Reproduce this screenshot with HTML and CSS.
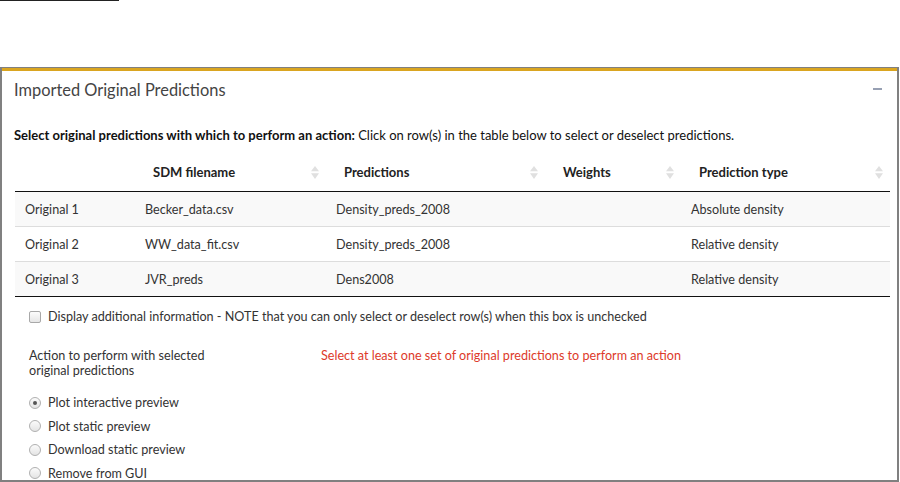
FILE: index.html
```html
<!DOCTYPE html>
<html lang="en">
<head>
    <meta charset="UTF-8">
    <title>Imported Original Predictions</title>
    <link rel="stylesheet" href="styles.css">
</head>
<body>
    <div class="tabline"></div>

    <div class="frame">
        <div class="box">
            <div class="box-header">
                <h3 class="box-title">Imported Original Predictions</h3>
                <span class="collapse"></span>
            </div>

            <p class="intro"><b>Select original predictions with which to perform an action:</b> Click on row(s) in the table below to select or deselect predictions.</p>

            <table class="preds">
                <colgroup>
                    <col style="width: 120px">
                    <col style="width: 191px">
                    <col style="width: 219px">
                    <col style="width: 136px">
                    <col style="width: 209px">
                </colgroup>
                <thead>
                    <tr>
                        <th></th>
                        <th class="sort">SDM filename</th>
                        <th class="sort">Predictions</th>
                        <th class="sort">Weights</th>
                        <th class="sort">Prediction type</th>
                    </tr>
                </thead>
                <tbody>
                    <tr>
                        <td>Original 1</td>
                        <td>Becker_data.csv</td>
                        <td>Density_preds_2008</td>
                        <td></td>
                        <td>Absolute density</td>
                    </tr>
                    <tr>
                        <td>Original 2</td>
                        <td>WW_data_fit.csv</td>
                        <td>Density_preds_2008</td>
                        <td></td>
                        <td>Relative density</td>
                    </tr>
                    <tr>
                        <td>Original 3</td>
                        <td>JVR_preds</td>
                        <td>Dens2008</td>
                        <td></td>
                        <td>Relative density</td>
                    </tr>
                </tbody>
            </table>

            <label class="check">
                <span class="checkbox"></span>
                Display additional information - NOTE that you can only select or deselect row(s) when this box is unchecked
            </label>

            <div class="action-row">
                <div class="action-left">
                    <div class="action-label">Action to perform with selected<br>original predictions</div>
                    <div class="radios">
                        <label class="radio"><span class="dot checked"></span>Plot interactive preview</label>
                        <label class="radio"><span class="dot"></span>Plot static preview</label>
                        <label class="radio"><span class="dot"></span>Download static preview</label>
                        <label class="radio"><span class="dot"></span>Remove from GUI</label>
                    </div>
                </div>
                <div class="warning">Select at least one set of original predictions to perform an action</div>
            </div>
        </div>
    </div>
</body>
</html>
```

FILE: styles.css
```css
body {
    margin: 0;
    font-family: Lato, "Open Sans", sans-serif;
    font-size: 12.6px;
    color: #333;
    background: #fff;
    overflow: hidden;
}
.tabline {
    width: 119px;
    height: 1px;
    background: #222;
    margin-bottom: 66px;
}
.frame {
    width: 895px;
    height: 412px;
    border: 2px solid #808080;
    border-top-width: 1px;
    overflow: hidden;
}
.box {
    border-top: 3px solid #daa520;
}
.box-header {
    display: flex;
    justify-content: space-between;
    align-items: center;
    padding: 3px 12px 0 12px;
    height: 30px;
}
.box-title {
    margin: 0;
    font-size: 16.4px;
    font-weight: normal;
    color: #444;
}
.collapse {
    width: 9px;
    height: 2px;
    background: #97a0b3;
    margin-right: 3px;
}
.intro {
    margin: 23px 0 0 12px;
    font-size: 13px;
    color: #111;
}
.preds {
    margin: 10px 0 0 13px;
    border-collapse: collapse;
    table-layout: fixed;
    width: 875px;
}
.preds th {
    text-align: left;
    font-size: 13px;
    font-weight: bold;
    padding: 0 10px 0 18px;
    height: 38px;
    border-bottom: 1px solid #111;
    color: #222;
    position: relative;
}
/* up/down sort arrows */
.preds th.sort::after {
    content: "";
    position: absolute;
    right: 7px;
    top: 13px;
    width: 8px;
    height: 13px;
    background: #e0e0e0;
    clip-path: polygon(50% 0, 100% 40%, 0 40%, 0 55%, 100% 55%, 50% 100%, 0 55%, 0 40%);
}
.preds td {
    padding: 0 10px;
    height: 34px;
    border-top: 1px solid #ddd;
}
.preds tbody tr:first-child td {
    border-top: none;
}
.preds tbody tr:nth-child(odd) {
    background: #f9f9f9;
}
.preds tbody tr:last-child td {
    border-bottom: 1px solid #111;
}
.check {
    display: flex;
    align-items: center;
    margin: 12px 0 0 27px;
}
.checkbox {
    width: 10px;
    height: 10px;
    border: 1px solid #a8a8a8;
    border-radius: 2px;
    background: linear-gradient(#fcfcfc, #e6e6e6);
    margin-right: 7px;
}
.action-row {
    display: flex;
    margin: 24px 0 0 27px;
}
.action-left {
    width: 292px;
}
.action-label {
    line-height: 15px;
}
.radios {
    margin-top: 13px;
}
.radio {
    display: flex;
    align-items: center;
    height: 23.5px;
}
.dot {
    width: 10px;
    height: 10px;
    border: 1px solid #b0b0b0;
    border-radius: 50%;
    background: linear-gradient(#fbfbfb, #e4e4e4);
    margin-right: 7px;
    position: relative;
}
.dot.checked::after {
    content: "";
    position: absolute;
    left: 3px;
    top: 3px;
    width: 4px;
    height: 4px;
    border-radius: 50%;
    background: #555;
}
.warning {
    color: #dd3a2a;
    line-height: 15px;
}
```
